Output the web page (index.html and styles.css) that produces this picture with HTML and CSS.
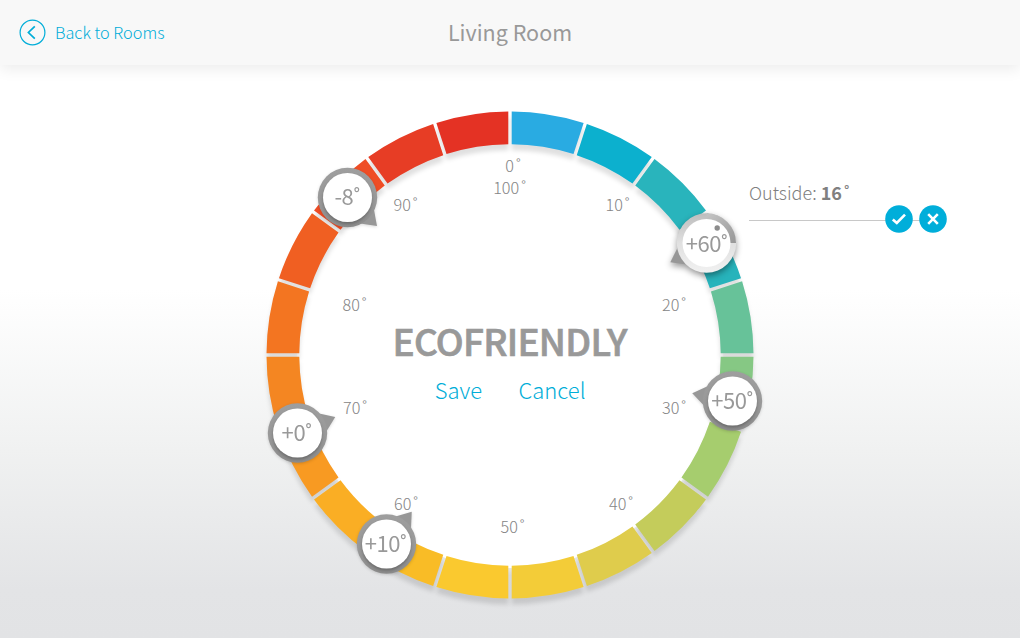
FILE: index.html
```html
<!DOCTYPE html>
<html lang="en">
<head>
<meta charset="utf-8">
<title>Living Room</title>
<link rel="stylesheet" href="styles.css">
</head>
<body>
<header class="topbar">
  <a class="back">
    <svg width="27" height="27" viewBox="0 0 27 27"><circle cx="13.5" cy="13.5" r="12.4"/><path class="chev" d="M15.8 7.3 9.4 13.5l6.4 6.2"/></svg>
    <span>Back to Rooms</span>
  </a>
  <h1 class="room">Living Room</h1>
</header>
<main class="stage">
  <svg class="dial" width="489" height="510" viewBox="-250 -255 489 510">
    <defs>
      <linearGradient id="rim" x1="0" y1="0" x2="0" y2="1"><stop offset="0" stop-color="#9e9e9e"/><stop offset=".6" stop-color="#989898"/><stop offset="1" stop-color="#8c8c8c"/></linearGradient>
      <linearGradient id="rimLight" x1="0" y1="0" x2="0" y2="1"><stop offset="0" stop-color="#bdbdbd"/><stop offset=".5" stop-color="#e0e0e0"/><stop offset="1" stop-color="#f1f1f1"/></linearGradient>
      <linearGradient id="arc" x1="0" y1="0" x2="1" y2="1"><stop offset="0" stop-color="#c2c2c2"/><stop offset="1" stop-color="#999"/></linearGradient>
      <path id="tip" class="tip" d="M41 0 20-15V15z"/>
    </defs>
    <circle r="213" fill="#fff"/>
    <g class="segments" id="segments"></g>
    <g class="scale">
      <text x="3" y="-183">0<tspan dx="2">˚</tspan></text>
      <text x="-0.500" y="-161">100<tspan dx="2">˚</tspan></text>
      <text x="107.500" y="-144">10<tspan dx="2">˚</tspan></text>
      <text x="164" y="-44">20<tspan dx="2">˚</tspan></text>
      <text x="164" y="59">30<tspan dx="2">˚</tspan></text>
      <text x="111" y="155">40<tspan dx="2">˚</tspan></text>
      <text x="2.500" y="178">50<tspan dx="2">˚</tspan></text>
      <text x="-104" y="155">60<tspan dx="2">˚</tspan></text>
      <text x="-155" y="59">70<tspan dx="2">˚</tspan></text>
      <text x="-155.500" y="-44">80<tspan dx="2">˚</tspan></text>
      <text x="-104.500" y="-144">90<tspan dx="2">˚</tspan></text>
    </g>
    <text class="mode" x="0" y="1" textLength="235">ECOFRIENDLY</text>
    <text class="action" x="-51.500" y="44">Save</text>
    <text class="action" x="42" y="44">Cancel</text>

    <g class="knob" transform="translate(-162.500 -157.500)"><use href="#tip" transform="rotate(44)"/><circle class="rim" r="29.700"/><circle class="face" r="24.500"/><text x="-.5" y="7.500">-8˚</text></g>
    <g class="knob" transform="translate(-212.500 78)"><use href="#tip" transform="rotate(-23)"/><circle class="rim" r="29.700"/><circle class="face" r="24.500"/><text x="-1" y="8">+0˚</text></g>
    <g class="knob" transform="translate(-123.500 189)"><use href="#tip" transform="rotate(-52)"/><circle class="rim" r="29.700"/><circle class="face" r="24.500"/><text x="-1" y="8">+10˚</text></g>
    <g class="knob" transform="translate(222.500 46)"><use href="#tip" transform="rotate(191)"/><circle class="rim" r="29.700"/><circle class="face" r="24.500"/><text x="-.5" y="8">+50˚</text></g>
    <g class="knob active" transform="translate(196.500 -112)"><use href="#tip" transform="rotate(152)"/><circle class="rim" r="29.700"/><path class="sweep" d="M0-26.500A26.500 26.500 0 0 1 26.500 0"/><circle class="face" r="24"/><circle class="dot" cx="10.700" cy="-15" r="2.700"/><text y="9">+60˚</text></g>
  </svg>
  <section class="outside">
    <p class="reading">Outside: <b>16</b><i>˚</i></p>
    <div class="rule">
      <svg class="round" width="28" height="28" viewBox="0 0 28 28"><circle cx="14" cy="14" r="13.800"/><path d="M7.800 14.500 11.800 18 20 9.600"/></svg>
      <svg class="round" width="28" height="28" viewBox="0 0 28 28"><circle cx="14" cy="14" r="13.800"/><path d="M9.200 9.200 18.800 18.800M18.800 9.200 9.200 18.800"/></svg>
    </div>
  </section>
</main>
<script src="dial.js"></script>
</body>
</html>
```
FILE: styles.css
```css
* { box-sizing: border-box; }
body {
  margin: 0;
  width: 1020px;
  height: 638px;
  overflow: hidden;
  font-family: "Noto Sans CJK SC", "Noto Sans", sans-serif;
  font-weight: 300;
  color: #808080;
  background: linear-gradient(#fff 0, #fff 290px, #f0f1f1 450px, #e3e4e6 590px, #e2e3e5 638px);
}
.topbar {
  display: grid;
  grid-template-columns: 1fr auto 1fr;
  align-items: center;
  height: 65px;
  padding-left: 19px;
  background: #f8f8f8;
  box-shadow: 0 4px 14px rgba(0, 0, 0, .08);
  clip-path: inset(0 0 -20px 0);
}
.back { display: flex; align-items: center; gap: 9px; color: #00add8; font-size: 16.300px; }
.back span { line-height: 20px; padding-bottom: 2px; }
.back svg { fill: none; stroke: #00add8; stroke-width: 1.200; }
.back .chev { stroke-width: 1.700; }
.room { margin: 0 19px 1px 0; font-size: 21.500px; font-weight: 400; line-height: 30px; color: #999; }
.stage { display: grid; grid-template-columns: 489px 198px; padding: 35px 0 0 260px; }
.dial { display: block; overflow: visible; }
.segments { filter: drop-shadow(0 6px 2px rgba(0, 0, 0, .12)); }
.dial text { text-anchor: middle; }
.scale text { font-size: 16.200px; fill: #858585; }
.dial .mode { font-size: 37px; font-weight: 500; fill: #999; stroke: #999; stroke-width: .7px; }
.dial .action { font-size: 22px; fill: #00add8; }
.knob { filter: drop-shadow(0 1px 1.500px rgba(0, 0, 0, .15)); }
.knob text { font-size: 22px; font-weight: 400; letter-spacing: -.4px; fill: #999; }
.tip { fill: #979797; }
.rim { fill: url(#rim); }
.face { fill: #fff; filter: drop-shadow(0 2px 1.500px rgba(0, 0, 0, .25)); }
.active { filter: drop-shadow(0 3px 3px rgba(0, 0, 0, .4)); }
.active .rim { fill: url(#rimLight); }
.active .face { filter: none; }
.sweep { fill: none; stroke: url(#arc); stroke-width: 6px; }
.dot { fill: #8c8c8c; }
.outside { padding-top: 79px; }
.reading { margin: 0; font-size: 18px; line-height: 26px; }
.reading b { font-weight: 700; }
.reading i { font-style: normal; font-weight: 400; margin-left: 2px; }
.rule {
  display: flex;
  justify-content: flex-end;
  gap: 6px;
  background: linear-gradient(#c8c8c8, #c8c8c8) 0 15px / 190px 1px no-repeat;
}
.round circle { fill: #00aeda; }
.round path { fill: none; stroke: #fff; stroke-width: 2.600; }
```
FILE: dial.js
```js
const colors = ['#29abe2', '#0cb0ce', '#29b4bc', '#27b3bb', '#67c299', '#86c884', '#a6cd6e', '#c4cc5b', '#dfcc4c', '#f3cc38',
  '#fac92f', '#f9bc26', '#faae24', '#f89a22', '#f48622', '#f37521', '#f05f22', '#ef4d25', '#e73d25', '#e43224'];
const outer = 243.5, inner = 210.7, half = 1.7;

// Each corner sits a constant distance from the dividing spoke, so gaps have parallel sides.
function corner(radius, degrees, side) {
  const a = degrees * Math.PI / 180 + side * Math.asin(half / radius);
  return (radius * Math.sin(a)).toFixed(2) + ' ' + (-radius * Math.cos(a)).toFixed(2);
}
const group = document.getElementById('segments');
colors.forEach((color, i) => {
  const from = i * 18, to = from + 18;
  const path = document.createElementNS('http://www.w3.org/2000/svg', 'path');
  path.setAttribute('d', `M${corner(outer, from, 1)}A${outer} ${outer} 0 0 1 ${corner(outer, to, -1)}L${corner(inner, to, -1)}A${inner} ${inner} 0 0 0 ${corner(inner, from, 1)}Z`);
  path.setAttribute('fill', color);
  group.appendChild(path);
});
```
